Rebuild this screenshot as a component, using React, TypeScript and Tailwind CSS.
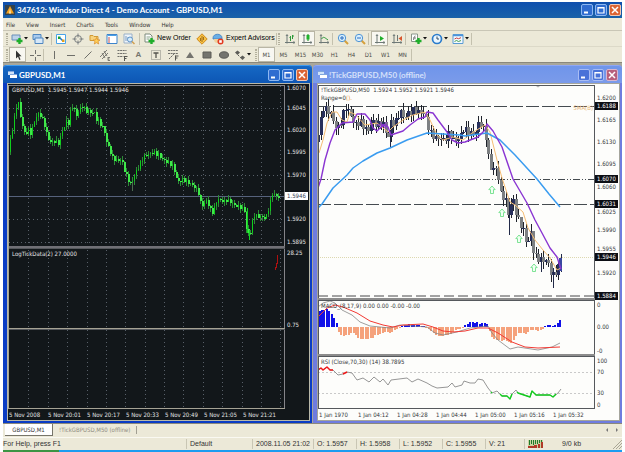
import type { ReactNode } from 'react';
import clsx from 'clsx';

type Point = [number, number];
type Label = { text: string; y: number; tag?: boolean };

// ---------- chart data ----------

const minutePath: Point[] = [
  [8, 163], [9, 157], [11, 145], [13, 135], [15, 123], [17, 112], [19, 101], [21, 105], [22, 117], [24, 125], [26, 133],
  [28, 132], [30, 130], [32, 133], [34, 128], [36, 122], [38, 116], [41, 113], [43, 117], [45, 122], [47, 128],
  [49, 138], [53, 143], [57, 140], [59, 143], [61, 143], [63, 132], [66, 127], [68, 121], [70, 123], [72, 112],
  [74, 106], [76, 110], [78, 116], [82, 108], [84, 106], [88, 111], [96, 113], [98, 119], [103, 125], [106, 132],
  [108, 142], [110, 147], [114, 158], [117, 160], [123, 160], [126, 170], [128, 176], [132, 185], [135, 178],
  [137, 173], [141, 165], [145, 157], [155, 152], [160, 155], [165, 160], [172, 164], [175, 167], [177, 175],
  [179, 182], [185, 180], [191, 183], [197, 188], [200, 193], [202, 203], [205, 206], [208, 200], [212, 210],
  [215, 213], [217, 203], [220, 200], [226, 202], [228, 200], [232, 202], [235, 205], [242, 207], [246, 210],
  [247, 227], [249, 233], [252, 232], [254, 222], [256, 215], [262, 217], [267, 218], [269, 213], [272, 202],
  [274, 193], [276, 195], [280, 197],
];

const tickPath: Point[] = [
  [318, 142], [321, 132], [323, 120], [324, 107], [327, 108], [330, 112], [332, 110], [335, 120], [338, 127],
  [341, 128], [343, 122], [346, 112], [348, 107], [351, 112], [354, 118], [357, 125], [360, 123], [363, 122],
  [367, 128], [370, 132], [373, 122], [376, 122], [379, 125], [382, 123], [385, 123], [388, 132], [390, 140],
  [392, 123], [395, 122], [397, 125], [400, 115], [403, 112], [407, 118], [410, 113], [413, 112], [417, 110],
  [420, 112], [424, 112], [427, 115], [429, 122], [432, 132], [435, 135], [438, 138], [442, 138], [445, 140],
  [448, 138], [452, 133], [455, 140], [460, 140], [463, 135], [466, 128], [468, 130], [472, 133], [474, 134],
  [478, 132], [479, 123], [482, 123], [485, 128], [488, 137], [489, 147], [491, 160], [493, 168], [497, 168],
  [500, 172], [502, 193], [507, 198], [510, 208], [511, 218], [513, 205], [515, 197], [517, 208], [519, 218],
  [523, 225], [527, 235], [529, 245], [532, 238], [533, 232], [535, 250], [538, 257], [542, 260], [547, 260],
  [550, 263], [552, 268], [554, 278], [557, 273], [560, 270], [562, 257],
];

const purpleLine =
  '318,188 321,179 325,160 330,143 335,130 342,123 353,122 357,114 365,114 370,120 373,128 377,131 383,125 388,127 391,135 397,133 403,131 410,125 418,119 425,117 427,112 433,113 438,120 447,132 452,140 458,143 465,142 478,137 485,130 487,124 493,131 502,147 513,179 527,203 535,220 542,233 550,248 557,257 561,269';
const blueLine =
  '318,208 322,204 333,188 347,175 353,168 363,161 377,153 390,148 407,140 427,133 443,134 460,135 465,136 487,133 500,140 515,155 537,179 549,194 560,207';
const orangeLine =
  '319,153 323,140 327,123 332,112 337,112 342,120 347,122 350,112 356,115 365,125 377,123 388,132 393,127 403,120 413,115 425,112 430,120 437,135 443,140 453,137 463,140 472,133 480,128 485,125 490,132 497,160 502,178 510,202 515,205 523,212 528,228 535,240 543,250 550,258 557,270 561,268';

const histogram = [
  16, 17, 17, 18, 16, 13, 9, 4,
  -5, -8, -9, -8, -8, -6, -6, -8, -11, -12, -12, -12, -12, -11, -11, -8, -8, -7, -6, -5, -5, -6, -5, -3, -2, -1,
  1, 2, 2, 3, 2, 2, 2, 2, 1, 1,
  -1, -2, -4, -6, -8, -9, -9, -9, -8, -8, -7, -5, -3, -2, -2, -1,
  2, 3, 5, 5, 4, 5, 3, 4, 4, 3,
  -4, -10, -12, -13, -13, -14, -13, -14, -15, -16, -13, -9, -6, -6, -6, -7, -5, -3, -3, -3, -4, -3, -2,
  1, 2, 2, 1, 2, 4, 7,
];

const macdSignal =
  '318,317 327,308 335,305 343,307 357,313 370,321 383,325 393,327 403,325 423,324 433,327 443,331 453,332 465,331 478,328 488,328 498,333 512,342 525,347 538,348 560,347';
const macdLine =
  '318,307 323,303 330,301 335,303 342,310 352,315 360,322 370,326 390,328 400,325 427,327 435,333 443,335 457,332 470,328 488,326 492,333 498,340 510,349 518,347 538,350 552,347 560,343';
const rsiLine =
  '318,370 321,368 323,370 327,367 330,370 333,370 338,375 343,374 347,372 352,373 357,380 363,378 369,382 374,377 380,382 383,379 388,385 391,380 407,378 412,382 418,379 427,383 432,386 437,388 448,387 452,383 455,387 462,385 464,381 470,383 475,383 478,379 483,380 488,388 492,393 497,391 502,396 507,396 510,399 512,394 516,390 518,393 530,397 532,391 536,395 550,395 553,397 558,393 561,389';

const minuteLabels: Label[] = [
  { text: '1.6070', y: 88 }, { text: '1.6045', y: 108 }, { text: '1.6020', y: 130 }, { text: '1.5995', y: 152 },
  { text: '1.5970', y: 175 }, { text: '1.5946', y: 196, tag: true }, { text: '1.5920', y: 219 },
  { text: '1.5895', y: 242 }, { text: '28.25', y: 253 }, { text: '0.75', y: 325 },
];

const tickLabels: Label[] = [
  { text: '1.6200', y: 98 }, { text: '1.6165', y: 120 }, { text: '1.6130', y: 142 }, { text: '1.6095', y: 164 },
  { text: '1.6060', y: 187 }, { text: '1.6025', y: 212 }, { text: '1.5990', y: 230 }, { text: '1.5955', y: 249 },
  { text: '1.5920', y: 273 }, { text: '1.6188', y: 106, tag: true }, { text: '1.6070', y: 179, tag: true },
  { text: '1.6031', y: 204, tag: true }, { text: '1.5946', y: 257, tag: true }, { text: '1.5884', y: 296, tag: true },
  { text: '0', y: 305 }, { text: '0.00', y: 327 }, { text: '-0', y: 351 },
  { text: '100', y: 361 }, { text: '70', y: 372 }, { text: '30', y: 393 }, { text: '0', y: 405 },
];

const minuteTimes = ['5 Nov 2008', '5 Nov 20:01', '5 Nov 20:17', '5 Nov 20:33', '5 Nov 20:49', '5 Nov 21:05', '5 Nov 21:21'];
const tickTimes = ['1 Jan 1970', '1 Jan 04:12', '1 Jan 04:28', '1 Jan 04:44', '1 Jan 05:00', '1 Jan 05:16', '1 Jan 05:32'];

const CHART_TOP = 84;

// value of the path at x, linear between its points
function valueAt(path: Point[], x: number) {
  for (let i = 1; i < path.length; i++) {
    const [x0, y0] = path[i - 1];
    const [x1, y1] = path[i];
    if (x <= x1) return y0 + ((y1 - y0) * (x - x0)) / (x1 - x0);
  }
  return path[path.length - 1][1];
}

function buildCandles(path: Point[], step: number, wick: number) {
  const first = path[0][0];
  const last = path[path.length - 1][0];
  const count = Math.floor((last - first) / step);
  return Array.from({ length: count }, (_, i) => {
    const x = first + i * step;
    const open = valueAt(path, x) + Math.sin(i * 2.7) * wick * 0.5;
    const close = valueAt(path, x + step) + Math.sin((i + 1) * 2.7) * wick * 0.5;
    const top = Math.min(open, close);
    const height = Math.max(Math.abs(close - open), 1);
    return {
      x,
      top,
      height,
      up: close < open,
      high: top - Math.abs(Math.sin(i * 1.9)) * wick,
      low: top + height + Math.abs(Math.cos(i * 2.3)) * wick,
    };
  });
}

// ---------- charts ----------

function MinuteChart() {
  const columns = [28, 48, 67, 87, 106, 125, 145, 164, 183, 203, 222, 242, 261, 280];
  return (
    <svg viewBox="8 84 277 325" preserveAspectRatio="none" className="block h-full w-full" shapeRendering="crispEdges">
      <rect x="8" y="84" width="277" height="325" fill="#12171a" />
      <g stroke="#586069" strokeDasharray="1 3">
        {columns.map((x) => <line key={x} x1={x + 0.5} x2={x + 0.5} y1="86" y2="408" />)}
        {[108, 130, 175, 219, 242].map((y) => (
          <line key={y} x1="9" x2="284" y1={y + 0.5} y2={y + 0.5} />
        ))}
      </g>
      <line x1="9" x2="284" y1="196.5" y2="196.5" stroke="#56627c" />
      {buildCandles(minutePath, 2, 4).map((c) => (
        <g key={c.x}>
          <rect x={c.x} y={c.high} width="1" height={c.low - c.high} fill="#2c8a36" />
          <rect x={c.x} y={c.top} width={c.up ? 1 : 2} height={c.height} fill={c.up ? '#0fcf1c' : '#3fe84a'} />
        </g>
      ))}
      <path d="M132.5 182v9" stroke="#4d6b50" />
      <path d="M247.5 208v25M249.5 230v10" stroke="#12d420" />
      <path d="M277.5 255v8h-1v4h-1v3" fill="none" stroke="#b01010" />
      <path d="M8 85.5h276.5V408" fill="none" stroke="#85858a" />
      <path d="M8 246.5h277" stroke="#707076" strokeWidth="2" />
      <path d="M8 248.5h277M8 329.5h277" stroke="#55585c" />
      <path d="M8 328.5h277M8.5 85v324M8 408.5h277" stroke="#a5a294" />
    </svg>
  );
}

function TickChart() {
  return (
    <svg viewBox="318 84 277 325" preserveAspectRatio="none" className="block h-full w-full">
      <rect x="318" y="84" width="277" height="325" fill="#fdfdfb" />
      <g shapeRendering="crispEdges">
        <line x1="318" x2="594" y1="106.5" y2="106.5" stroke="#454b50" strokeDasharray="13 3" />
        <line x1="318" x2="594" y1="179.5" y2="179.5" stroke="#454b50" strokeDasharray="7 2 1 2 1 2" />
        <line x1="318" x2="594" y1="204.5" y2="204.5" stroke="#454b50" strokeDasharray="13 3" />
        <line x1="318" x2="594" y1="257.5" y2="257.5" stroke="#ddd8b0" strokeDasharray="1 1" />
        <line x1="318" x2="594" y1="296" y2="296" stroke="#a3a3a3" strokeWidth="2" strokeDasharray="10 4" />
        <line x1="318" x2="594" y1="372.5" y2="372.5" stroke="#c9c9c9" strokeDasharray="2 2" />
        <line x1="318" x2="594" y1="393.5" y2="393.5" stroke="#c9c9c9" strokeDasharray="2 2" />
        {buildCandles(tickPath, 2.5, 7).map((c) => (
          <g key={c.x}>
            <rect x={c.x} y={c.high} width="1" height={c.low - c.high} fill="#20242c" />
            <rect x={c.x - 1} y={c.top} width="3" height={c.height} fill={c.up ? '#28305c' : '#7d8082'} />
          </g>
        ))}
        <path d="M390.5 120v27M509.5 198v37M541.5 258v14M553.5 268v20M561 254v18" stroke="#222a48" />
        <rect x="559" y="258" width="3" height="13" fill="#3a48a0" />
        {histogram.map((v, i) => (
          <rect
            key={i}
            x={318.5 + i * 2.43}
            y={v > 0 ? 327 - v : 327}
            width="2"
            height={Math.abs(v)}
            fill={v > 0 ? '#1010e8' : '#f5a27c'}
          />
        ))}
      </g>
      <g fill="none" strokeLinejoin="round">
        <polyline points={orangeLine} stroke="#f5bd74" />
        <polyline points={blueLine} stroke="#3a9cf0" strokeWidth="1.5" />
        <polyline points={purpleLine} stroke="#8a35d2" strokeWidth="1.4" />
        <path d="M380 122l6 7M380 129l7-7M377 125h11" stroke="#8a35d2" />
        <polyline points={macdLine} stroke="#858585" strokeWidth="0.8" />
        <polyline points={macdSignal} stroke="#f23a34" />
        <polyline points={rsiLine} stroke="#8a8a8a" strokeWidth="0.9" />
        <path d="M318 370l3-2 2 2 4-3 3 3h3M343 374l4-2" stroke="#f01818" strokeWidth="1.5" />
        <path d="M491 392l1 1M500 394l2 2h5l3 3 2-5M517 392l1 1 12 4 2-6 4 4h14l3 2 3-3" stroke="#12cc1e" strokeWidth="1.4" />
      </g>
      {[[492, 190], [502, 213], [519, 239], [534, 268]].map(([x, y]) => (
        <path
          key={x}
          d={`M${x} ${y - 4}l3.2 3.6h-1.7v3.9h-3v-3.9h-1.7z`}
          fill="#f1fff3"
          stroke="#5fdc7c"
          strokeWidth="0.8"
        />
      ))}
      <g shapeRendering="crispEdges">
        <path d="M318 85.5h276.5V409M318.5 85v324M318 408.5h277" fill="none" stroke="#55585c" />
        <path d="M318 299h277M318 355h277" stroke="#8c8c8c" strokeWidth="2" />
        <path d="M318 300.5h277M318 356.5h277" stroke="#55585c" />
      </g>
      <path d="M536 86h4l-2 1.500z" fill="#b5b5b5" />
    </svg>
  );
}

function PriceAxis({ labels, dark }: { labels: Label[]; dark?: boolean }) {
  return (
    <div className="relative w-6 shrink-0">
      {labels.map((l) => (
        <span
          key={l.text + l.y}
          style={{ top: l.y - CHART_TOP - 4 }}
          className={clsx(
            'absolute left-0 h-2 px-0.5 leading-2',
            l.tag && 'w-[23px]',
            l.tag && (dark ? 'bg-white text-gray-700' : 'bg-[#0c0e14] text-white'),
          )}
        >
          {l.text}
        </span>
      ))}
    </div>
  );
}

// ---------- window chrome ----------

function CaptionButtons({ faded }: { faded?: boolean }) {
  const blue = faded ? 'bg-[#4a72d8] border-[#a9bdf4]' : 'bg-[#2f6cd0] border-[#8db8f2]';
  return (
    <div className="flex shrink-0 gap-0.5">
      <button aria-label="Minimize" className={clsx('flex size-3 items-center justify-center rounded-xs border', blue)}>
        <svg viewBox="0 0 10 10" className="size-2.5"><path d="M2 7.500h4" stroke="#fff" strokeWidth="2" /></svg>
      </button>
      <button aria-label="Maximize" className={clsx('flex size-3 items-center justify-center rounded-xs border', blue)}>
        <svg viewBox="0 0 10 10" className="size-2.5">
          <path d="M2 2.500h6v5.500H2zM2 3h6" fill="none" stroke="#fff" strokeWidth="1.200" />
        </svg>
      </button>
      <button
        aria-label="Close"
        className={clsx(
          'flex size-3 items-center justify-center rounded-xs border',
          faded ? 'border-[#d7b6d0] bg-[#b8607c]' : 'border-[#f0c8b4] bg-[#dc6434]',
        )}
      >
        <svg viewBox="0 0 10 10" className="size-2.5"><path d="M2 2l6 6M8 2L2 8" stroke="#fff" strokeWidth="1.500" /></svg>
      </button>
    </div>
  );
}

function ChartWindow(props: {
  title: string;
  active?: boolean;
  chart: ReactNode;
  caption: ReactNode;
  labels: Label[];
  times: string[];
}) {
  const { title, active, chart, caption, labels, times } = props;
  return (
    <section
      className={clsx(
        'min-w-0 flex-1 rounded-t-sm pr-0.5 pb-0.5 pl-1',
        active ? 'bg-[#0a3cc4]' : 'bg-[#6f7cdf]',
      )}
    >
      <header
        className={clsx(
          '-mr-0.5 -ml-1 flex h-[18px] items-center gap-0.5 rounded-t-sm border-t pr-1 pl-[5px]',
          active
            ? 'border-[#3f9cf0] bg-linear-to-b from-[#1668c4] to-[#0d56b4]'
            : 'border-[#8fa6f4] bg-linear-to-b from-[#6f95ea] to-[#7b9bea]',
        )}
      >
        <svg viewBox="0 0 9 9" className="size-[9px]">
          <path d="M0 1h6v4H0z" fill="#cfe2f8" />
          <path d="M2 4h7v4H2z" fill="#fff" />
          <path d="M2 4.500h7M0 1.500h6" stroke="#7fa6dc" />
        </svg>
        <h2
          className={clsx(
            "flex-1 truncate font-['Lato',sans-serif] text-[8px] leading-3 font-bold",
            active ? 'text-white' : 'text-[#d5e0fa]',
          )}
        >
          {title}
        </h2>
        <CaptionButtons faded={!active} />
      </header>
      <div
        className={clsx(
          "border font-['DejaVu_Sans_Condensed','DejaVu_Sans',sans-serif] text-[6px]",
          active ? 'border-[#b9b8a8] bg-[#12171a] text-[#e4e4e4]' : 'border-[#a5a59c] bg-[#fdfdfb] text-[#33363a]',
        )}
      >
        <div className="flex h-[325px]">
          <div className="relative min-w-0 flex-1">
            {chart}
            {caption}
          </div>
          <PriceAxis labels={labels} dark={active} />
        </div>
        <div className="flex h-[11px] overflow-hidden pl-px leading-[11px] whitespace-nowrap">
          {times.map((t) => (
            <span key={t} className="w-[39px] shrink-0">{t}</span>
          ))}
        </div>
      </div>
    </section>
  );
}

// ---------- toolbar ----------

function Grip() {
  return <span className="mx-px h-3 w-0.5 shrink-0 border-x border-dotted border-[#b3b09c]" />;
}

function Divider() {
  return <span className="h-3 w-px shrink-0 bg-[#c4c1ae]" />;
}

function Tool({ label, pressed, menu, children }: { label: string; pressed?: boolean; menu?: boolean; children: ReactNode }) {
  return (
    <button
      aria-label={label}
      className={clsx(
        'flex h-[15px] shrink-0 items-center justify-center',
        menu ? 'w-[21px]' : 'w-[17px]',
        pressed && 'border border-[#b9b6a5] bg-[#f8f7f1]',
      )}
    >
      <svg viewBox="0 0 12 12" className="size-3 shrink-0" fill="none">{children}</svg>
      {menu && (
        <svg viewBox="0 0 4 3" className="ml-px h-[3px] w-1 shrink-0"><path d="M0 0h4L2 2.500z" fill="#111" /></svg>
      )}
    </button>
  );
}

const plus = <path d="M8.500 5v6M5.500 8h6" stroke="#1fae2a" strokeWidth="2.400" />;
const axes = <path d="M3 2v8.500M1 9.500h9.500M2 3l1-1.500L4 3M9.500 8.500l1.500 1-1.500 1" stroke="#6d7876" />;

function StandardToolbar() {
  return (
    <div className="flex h-4 items-center border-t border-[#c9c6b6] pl-0.5">
      <Grip />
      <Tool label="New chart" menu>
        <path d="M1 2h8v5H1z" fill="#bcd3ea" stroke="#6b8fb8" />
        {plus}
      </Tool>
      <Tool label="Profiles" menu>
        <path d="M1 1.500h8v5H1z" fill="#a9cbee" stroke="#4f86c0" />
        <path d="M3 5h8v5.500H3z" fill="#d7e8f8" stroke="#4f86c0" />
      </Tool>
      <Divider />
      <Tool label="Market watch">
        <path d="M1.500 1.500h9v9h-9z" fill="#fff" stroke="#4aa3e8" />
        <path d="M3 3.500h2.500V6H3z" fill="#1aa32a" />
        <path d="M5 5l3.500 3.500" stroke="#2276c8" strokeWidth="1.500" />
        <path d="M7 6.500h2.500V9H7z" fill="#e0a020" />
      </Tool>
      <Tool label="Data window">
        <circle cx="6" cy="6" r="3.500" stroke="#7a7f80" />
        <path d="M6 .5v4M6 7.500v4M.5 6h4M7.500 6h4" stroke="#7a7f80" />
      </Tool>
      <Tool label="Navigator">
        <path d="M1 2.500h3l1 1h4v4H1z" fill="#f8d27c" stroke="#d19a34" />
        <path d="M7.500 4.500l1 2.300 2.500.2-2 1.500.7 2.500-2.200-1.300L5.300 11 6 8.500 4 7l2.500-.2z" fill="#ffcf58" stroke="#d98a28" strokeWidth=".7" />
      </Tool>
      <Tool label="Terminal">
        <path d="M1 1.500h10v9H1z" fill="#fff" stroke="#3c84cc" />
        <path d="M1.500 2.500h9" stroke="#4aa0e8" />
        <path d="M3 4v6" stroke="#c05050" />
      </Tool>
      <Tool label="Strategy tester">
        <path d="M1 1h8v9H1z" fill="#eef4fa" stroke="#9ab0c8" />
        <path d="M3 3v5M5 4v4" stroke="#7a9cc0" />
        <circle cx="7" cy="6.500" r="2.500" fill="#d6ecfb" stroke="#5f94c8" />
        <path d="M9 8.500l2.500 2.500" stroke="#d0a050" strokeWidth="1.500" />
      </Tool>
      <span className="w-0.5 shrink-0" />
      <Divider />
      <button className="flex h-[15px] w-[53px] shrink-0 items-center gap-0.5 pl-[3px] text-[7px] whitespace-nowrap">
        <svg viewBox="0 0 12 12" className="size-3 shrink-0" fill="none">
          <path d="M2 1h5l2 2v6H2z" fill="#fff" stroke="#7c8a7c" />
          <path d="M3.500 4h4M3.500 6h3" stroke="#8ba48b" />
          {plus}
        </svg>
        New Order
      </button>
      <Tool label="MetaEditor">
        <path d="M6 .8L11.200 6 6 11.200.8 6z" fill="#f8c244" stroke="#cf8a1c" />
        <path d="M6 3v6M4.500 5v3M7.500 4v3" stroke="#8d5a10" strokeWidth=".8" />
      </Tool>
      <button className="flex h-[15px] w-[66px] shrink-0 items-center gap-0.5 pl-0.5 text-[7px] whitespace-nowrap">
        <svg viewBox="0 0 12 12" className="size-3 shrink-0" fill="none">
          <path d="M1 5c0-5 9-5 9 0v1H1z" fill="#6aaee6" stroke="#3a7cc0" strokeWidth=".8" />
          <path d="M2 6h7c0 3-1.500 4-3.500 4S2 9 2 6z" fill="#f0cf9a" />
          <circle cx="8.500" cy="8.500" r="3" fill="#e23a20" />
          <path d="M7.200 7.200h2.600v2.600H7.200z" fill="#fff" />
        </svg>
        Expert Advisors
      </button>
      <Divider />
      <Grip />
      <Tool label="Bar chart">
        {axes}
        <path d="M6.500 3v5M5.500 4.500h1M8.500 2v4M8.500 3h1.500" stroke="#2c9a3a" />
      </Tool>
      <Tool label="Candlesticks" pressed>
        {axes}
        <path d="M7 1v7" stroke="#128a20" />
        <path d="M5.500 2h3v4.500h-3z" fill="#1fb32c" />
      </Tool>
      <Tool label="Line chart">
        {axes}
        <path d="M3.500 6c2-3 3-1.500 6.500 1" stroke="#2c9a3a" />
      </Tool>
      <Divider />
      <span className="w-px shrink-0" />
      <Tool label="Zoom in">
        <path d="M7.500 7.500L11 11" stroke="#d6a03c" strokeWidth="2" />
        <circle cx="5" cy="5" r="3.700" fill="#d8eefc" stroke="#4f94d4" />
        <path d="M5 3v4M3 5h4" stroke="#2a6cc0" />
      </Tool>
      <Tool label="Zoom out">
        <path d="M7.500 7.500L11 11" stroke="#d6a03c" strokeWidth="2" />
        <circle cx="5" cy="5" r="3.700" fill="#d8eefc" stroke="#4f94d4" />
        <path d="M3 5h4" stroke="#2a6cc0" />
      </Tool>
      <Divider />
      <span className="w-0.5 shrink-0" />
      <Tool label="Auto scroll" pressed>
        {axes}
        <path d="M6 3l4 2.500L6 8z" fill="#1fae2a" />
      </Tool>
      <Tool label="Chart shift">
        {axes}
        <path d="M6.500 2v6" stroke="#6d7876" />
        <path d="M11 3v5L7.500 5.500z" fill="#d8552c" />
      </Tool>
      <Divider />
      <span className="w-0.5 shrink-0" />
      <Tool label="Indicators" menu>
        <path d="M1.500 1h6v7.500h-6z" fill="#fff" stroke="#8a958a" />
        <path d="M3.500 7c1-4 1-4 2-4M3 5h3" stroke="#777" />
        {plus}
      </Tool>
      <Tool label="Periods" menu>
        <circle cx="6" cy="6" r="4.500" fill="#eaf6ff" stroke="#2b7ccc" strokeWidth="1.700" />
        <path d="M6 3.500V6h2" stroke="#33485c" />
      </Tool>
      <Tool label="Templates" menu>
        <path d="M1 1.500h10v9H1z" fill="#f3f9fe" stroke="#5a9bd4" />
        <path d="M1 2.500h10" stroke="#4a94dc" strokeWidth="1.500" />
        <path d="M2.500 6l2-1 2 .7 2.500-1" stroke="#c84040" />
        <path d="M2.500 8.500l2-1 2 1 2.500-1" stroke="#46a050" />
      </Tool>
      <Divider />
    </div>
  );
}

const periods = ['M1', 'M5', 'M15', 'M30', 'H1', 'H4', 'D1', 'W1', 'MN'];

function LineToolbar() {
  return (
    <div className="flex h-4 items-center border-t border-[#dcd9c8] pl-0.5">
      <Grip />
      <Tool label="Cursor" pressed>
        <path d="M4 1.500v8l2-1.700L7.300 11l1.200-.6L7.200 7.300H9.500z" fill="#333" />
      </Tool>
      <Tool label="Crosshair">
        <path d="M6.500 1v4M6.500 8v4M1 6.500h4M8 6.500h4" stroke="#6f6f6a" />
      </Tool>
      <Divider />
      <span className="w-px shrink-0" />
      <Tool label="Vertical line"><path d="M6.500 2v8" stroke="#6f6f6a" /></Tool>
      <Tool label="Horizontal line"><path d="M2 6.500h8" stroke="#6f6f6a" /></Tool>
      <Tool label="Trendline"><path d="M2.500 9.500l7-7" stroke="#6f6f6a" /></Tool>
      <Tool label="Equidistant channel">
        <path d="M1 8l7-7M3 10l6-6M3 4l3 5M5 2l3 5M9 8v3.500M9 8.500h2M9 10h1.500M9 11.500h2" stroke="#6f6f6a" strokeWidth=".9" />
      </Tool>
      <Tool label="Fibonacci retracement">
        <path d="M1.500 1.500h9M1.500 4.500h9M1.500 7.500h6" stroke="#6f6f6a" strokeDasharray="2 .6" />
        <path d="M8.500 7v5M8.500 7.500h3M8.500 9.500h2" stroke="#55554f" />
      </Tool>
      <button className="h-[15px] w-[17px] shrink-0 text-[8px] font-bold text-[#75756f]">A</button>
      <Tool label="Text label">
        <path d="M1.500 1.500h9v9h-9z" stroke="#85857f" strokeDasharray="1 1" />
        <path d="M3.500 4h5M6 4v5" stroke="#55554f" strokeWidth="1.300" />
      </Tool>
      <Tool label="Fibonacci fan">
        <path d="M1 1.500h10M1 4.500h10M2 10l5-5" stroke="#6f6f6a" strokeDasharray="2 .6" />
        <path d="M8.500 6.500v5M8.500 7h3M8.500 9h2" stroke="#55554f" />
      </Tool>
      <Tool label="Triangle"><path d="M6 3l4 6H2z" fill="#74746e" /></Tool>
      <Tool label="Rectangle"><path d="M2 3h8v6H2z" fill="#74746e" stroke="#5c5c57" /></Tool>
      <Tool label="Ellipse"><ellipse cx="6" cy="6" rx="4.500" ry="3.200" fill="#74746e" stroke="#5c5c57" /></Tool>
      <Tool label="Arrows" menu>
        <path d="M1 3.500L3.500 1.500 6 3.500 3.500 6z" fill="#5c5c57" />
        <path d="M4 6l3 3" stroke="#5c5c57" strokeDasharray="1.500 1" />
        <path d="M6 8.500l2.500-2 2.500 2L8.500 11z" fill="#5c5c57" />
      </Tool>
      <span className="w-px shrink-0" />
      <Grip />
      {periods.map((p, i) => (
        <button
          key={p}
          className={clsx(
            "h-[15px] w-[17px] shrink-0 font-['DejaVu_Sans_Condensed','DejaVu_Sans',sans-serif] text-[6px] text-[#4b4b46]",
            i === 0 && 'border border-[#b9b6a5] bg-[#f8f7f1]',
          )}
        >
          {p}
        </button>
      ))}
      <Divider />
    </div>
  );
}

// ---------- page ----------

const menus = ['File', 'View', 'Insert', 'Charts', 'Tools', 'Window', 'Help'];

function StatusBar() {
  const cell = 'shrink-0 border-l border-[#c9c6b4] pl-[3px]';
  return (
    <footer className="flex h-[13px] items-center border-t border-[#faf9f2] text-[7px] leading-[10px] whitespace-nowrap text-[#333]">
      <span className="min-w-0 flex-1">For Help, press F1</span>
      <span className={clsx(cell, 'w-[66px]')}>Default</span>
      <span className={clsx(cell, 'w-[61px]')}>2008.11.05 21:02</span>
      <span className={clsx(cell, 'w-[43px]')}>O: 1.5957</span>
      <span className={clsx(cell, 'w-[43px]')}>H: 1.5958</span>
      <span className={clsx(cell, 'w-[43px]')}>L: 1.5952</span>
      <span className={clsx(cell, 'w-[43px]')}>C: 1.5955</span>
      <span className={clsx(cell, 'w-[39px]')}>V: 21</span>
      <span className={clsx(cell, 'flex w-[98px] items-center')}>
        <svg viewBox="0 0 15 8" className="h-2 w-[15px]" shapeRendering="crispEdges">
          <path d="M0 0h15v8H0z" fill="#c9d3a0" />
          <path d="M1 0h1v5H1zM3 0h1v4H3zM5 0h1v5H5zM7 0h1v4H7zM9 0h1v4H9zM11 0h1v3h-1zM13 0h1v2h-1z" fill="#1f7a2a" />
          <path d="M0 6h6v2H0zM6 5h3v3H6zM10 4h2v4h-2zM13 2h2v6h-2z" fill="#b03a28" />
        </svg>
        <span className="flex-1 pl-[19px]">9/0 kb</span>
        <svg viewBox="0 0 9 9" className="size-[9px]"><path d="M0 9l9-9M3 9l6-6M6 9l3-3" stroke="#a9a695" /></svg>
      </span>
    </footer>
  );
}

export default function App() {
  return (
    <div className="bg-white px-[3px] pt-0.5 font-['Liberation_Sans',sans-serif]">
      <div className="bg-[#ece9d8]">
        <header className="flex h-4 items-center gap-0.5 bg-linear-to-b from-[#0f4fae] to-[#1b62a8] pr-px pl-0.5">
          <svg viewBox="0 0 10 10" className="size-2.5 shrink-0">
            <path d="M0 0h10v10H0z" fill="#33434f" />
            <path d="M5 1l4 7.500H1z" fill="#f6a21c" />
            <path d="M5 3.500l1 5H4z" fill="#fff3c4" />
          </svg>
          <h1 className="flex-1 truncate font-['Lato',sans-serif] text-[8px] leading-3 font-bold text-white">
            347612: Windsor Direct 4 - Demo Account - GBPUSD,M1
          </h1>
          <CaptionButtons />
        </header>

        <nav className="flex h-3 items-center gap-[11px] pl-[3px] font-['DejaVu_Sans_Condensed','DejaVu_Sans',sans-serif] text-[6px] text-[#333]">
          {menus.map((m) => <button key={m}>{m}</button>)}
        </nav>

        <StandardToolbar />
        <LineToolbar />

        <main className="flex gap-px border-t border-[#8a887c] bg-[#a9a79a] pt-0.5">
          <ChartWindow
            title="GBPUSD,M1"
            active
            chart={<MinuteChart />}
            caption={
              <>
                <p className="absolute top-0.5 left-1 leading-2 whitespace-pre">GBPUSD,M1  1.5945 1.5947 1.5944 1.5946</p>
                <p className="absolute top-[166px] left-1 leading-2">LogTickData(2) 27.0000</p>
              </>
            }
            labels={minuteLabels}
            times={minuteTimes}
          />
          <ChartWindow
            title="!TickGBPUSD,M50 (offline)"
            chart={<TickChart />}
            caption={
              <>
                <p className="absolute top-0.5 left-[3px] leading-2 whitespace-pre">
                  !TickGBPUSD,M50  1.5924 1.5952 1.5921 1.5946
                </p>
                <p className="absolute top-2.5 left-[3px] leading-2">
                  Range=0<span className="text-[#e8902c]">().</span>
                </p>
                <p className="absolute top-5 right-0.5 leading-2 text-[#e8b878]">SMA(B)</p>
                <p className="absolute top-[218px] left-[3px] leading-2">MACD_(8,17,9) 0.00 0.00 -0.00 -0.00</p>
                <p className="absolute top-[274px] left-[3px] leading-2">RSI (Close,70,30) (14) 38.7895</p>
              </>
            }
            labels={tickLabels}
            times={tickTimes}
          />
        </main>

        <div className="flex h-3.5 items-start border-t border-[#8a887c] pl-0.5 font-['DejaVu_Sans_Condensed','DejaVu_Sans',sans-serif] text-[6px] leading-3">
          <button className="h-3 w-12 border-r border-b border-[#77756a] bg-white text-[#333]">GBPUSD,M1</button>
          <button className="ml-1.5 pr-1.5 text-[#8e8c80]">!TickGBPUSD,M50 (offline)</button>
          <span className="mt-0.5 h-2 w-px bg-[#a19f92]" />
          <span className="flex-1" />
          <button aria-label="Previous tab" className="flex h-3 w-2.5 items-center justify-center">
            <svg viewBox="0 0 4 4" className="size-1"><path d="M3 0v4L1 2z" fill="#777" /></svg>
          </button>
          <button aria-label="Next tab" className="flex h-3 w-2.5 items-center justify-center">
            <svg viewBox="0 0 4 4" className="size-1"><path d="M1 0v4l2-2z" fill="#777" /></svg>
          </button>
        </div>

        <StatusBar />
      </div>
      <div className="flex h-0.5 bg-[#1d9cf0]">
        <span className="w-14 bg-[#3c9444]" />
      </div>
    </div>
  );
}
